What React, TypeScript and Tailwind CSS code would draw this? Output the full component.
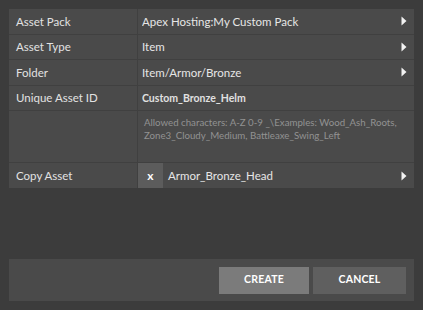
import React from "react";

const Arrow = () => (
  <svg width="6" height="10" viewBox="0 0 6 10" className="shrink-0">
    <path d="M0.5 0.5 L5.5 5 L0.5 9.5 Z" fill="#f2f2f2" />
  </svg>
);

const Row = ({ label, children, arrow }: { label: string; children: React.ReactNode; arrow?: boolean }) => (
  <div className="flex h-[24.5px] gap-[1px]">
    <div className="w-[128px] bg-[#4a4a4a] flex items-center pl-[7px] text-[11.5px] text-[#e2e2e2]">{label}</div>
    <div className="flex-1 bg-[#4a4a4a] flex items-center pl-[4px] pr-[7px] text-[11.5px] text-[#e6e6e6]">
      <div className="flex-1 truncate">{children}</div>
      {arrow && <Arrow />}
    </div>
  </div>
);

export default function App() {
  return (
    <div
      className="w-[423px] h-[310px] bg-[#3c3c3c] p-[9px] pb-[9px] flex flex-col"
      style={{ fontFamily: "Lato, 'Noto Sans', sans-serif" }}
    >
      <div className="flex flex-col gap-[1px] bg-[#404040]">
        <Row label="Asset Pack" arrow>Apex Hosting:My Custom Pack</Row>
        <Row label="Asset Type" arrow>Item</Row>
        <Row label="Folder" arrow>Item/Armor/Bronze</Row>
        <Row label="Unique Asset ID">
          <span className="font-bold text-[10.5px] text-[#e0e0e0]">Custom_Bronze_Helm</span>
        </Row>
        <div className="flex h-[51px] gap-[1px]">
          <div className="w-[128px] bg-[#4a4a4a]" />
          <div className="flex-1 bg-[#4a4a4a] pl-[6px] pr-[4px] pt-[5px] text-[9.7px] leading-[12.5px] text-[#929292]">
            Allowed characters: A-Z 0-9 _\Examples: Wood_Ash_Roots,
            <br />
            Zone3_Cloudy_Medium, Battleaxe_Swing_Left
          </div>
        </div>
        <div className="flex h-[25px] gap-[1px]">
          <div className="w-[128px] bg-[#4a4a4a] flex items-center pl-[7px] text-[11.5px] text-[#e2e2e2]">Copy Asset</div>
          <div className="flex-1 bg-[#4a4a4a] flex items-center pr-[7px] text-[11.5px] text-[#e6e6e6]">
            <div className="w-[25px] h-full bg-[#5c5c5c] flex items-center justify-center font-bold text-[12px] text-white">x</div>
            <div className="flex-1 pl-[5px]">Armor_Bronze_Head</div>
            <Arrow />
          </div>
        </div>
      </div>
      <div className="flex-1" />
      <div className="h-[42px] bg-[#4a4a4a] flex items-center justify-end gap-[4px] pr-[8px]">
        <button className="w-[90px] h-[27px] bg-[#7b7b7b] text-white font-bold text-[10.5px] tracking-[0.2px]">CREATE</button>
        <button className="w-[93px] h-[27px] bg-[#5f5f5f] text-white font-bold text-[10.5px] tracking-[0.2px]">CANCEL</button>
      </div>
    </div>
  );
}
